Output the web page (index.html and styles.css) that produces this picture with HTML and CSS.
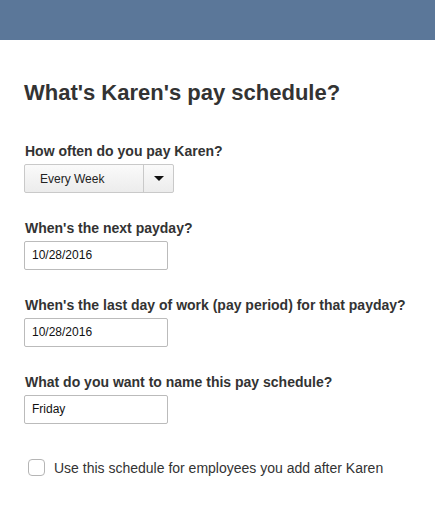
FILE: index.html
```html
<!DOCTYPE html>
<html>
<head>
    <title>Pay schedule</title>
    <link rel="stylesheet" href="styles.css">
</head>
<body>
    <div class="topbar"></div>

    <div class="content">
        <h1>What's Karen's pay schedule?</h1>

        <div class="field">
            <label>How often do you pay Karen?</label>
            <div class="select">
                <span class="select-value">Every Week</span>
                <span class="select-arrow"><span class="caret"></span></span>
            </div>
        </div>

        <div class="field">
            <label>When's the next payday?</label>
            <div class="textbox">10/28/2016</div>
        </div>

        <div class="field">
            <label>When's the last day of work (pay period) for that payday?</label>
            <div class="textbox">10/28/2016</div>
        </div>

        <div class="field">
            <label>What do you want to name this pay schedule?</label>
            <div class="textbox">Friday</div>
        </div>

        <div class="check-row">
            <span class="checkbox"></span>
            <span>Use this schedule for employees you add after Karen</span>
        </div>
    </div>
</body>
</html>
```

FILE: styles.css
```css
body { margin: 0; font-family: "Liberation Sans", Arial, sans-serif; color: #333; background: #fff; }
.topbar { height: 40px; background: #5b7799; }
.content { padding: 0 24px; }
h1 { font-size: 22px; font-weight: bold; margin: 40px 0 0; line-height: 25px; color: #333; }
.field { margin-top: 37px; }
.field + .field { margin-top: 26px; }
label { display: block; font-size: 14px; font-weight: bold; line-height: 18px; padding-left: 1px; margin-bottom: 4px; }
.select { display: flex; width: 150px; height: 29px; box-sizing: border-box; border: 1px solid #c9c9c9; border-radius: 2px; background: linear-gradient(#fafafa, #ececec); font-size: 12px; }
.select-value { flex: 1; padding-left: 15px; line-height: 28px; color: #222; }
.select-arrow { width: 29px; border-left: 1px solid #c9c9c9; display: flex; align-items: center; justify-content: center; }
.caret { width: 0; height: 0; border-left: 5px solid transparent; border-right: 5px solid transparent; border-top: 5px solid #111; }
.textbox { width: 144px; height: 29px; box-sizing: border-box; border: 1px solid #bbb; border-radius: 2px; padding-left: 7px; font-size: 12px; line-height: 27px; color: #111; }
.check-row { display: flex; align-items: center; gap: 9px; margin-top: 35px; padding-left: 4px; font-size: 14px; }
.checkbox { width: 17px; height: 17px; box-sizing: border-box; border: 1px solid #b5b5b5; border-radius: 4px; background: #fff; }
```
